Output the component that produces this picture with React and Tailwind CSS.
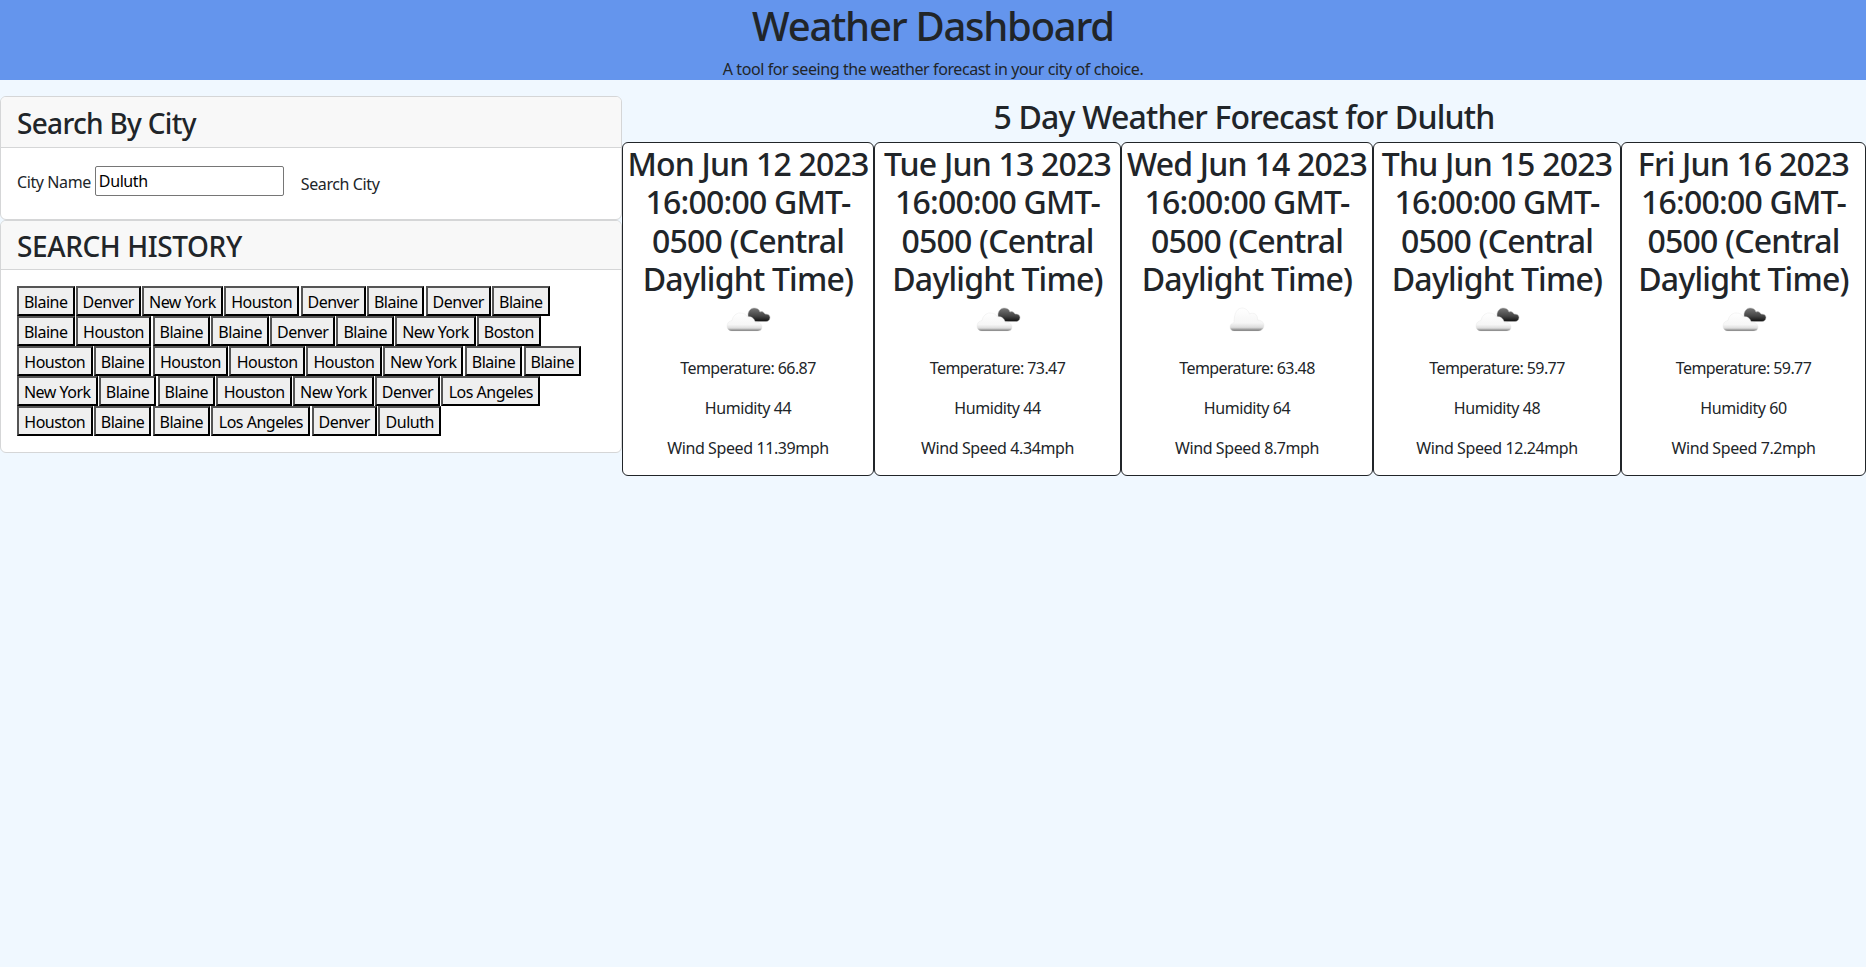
const rows = [
  ["Blaine","Denver","New York","Houston","Denver","Blaine","Denver","Blaine"],
  ["Blaine","Houston","Blaine","Blaine","Denver","Blaine","New York","Boston"],
  ["Houston","Blaine","Houston","Houston","Houston","New York","Blaine","Blaine"],
  ["New York","Blaine","Blaine","Houston","New York","Denver","Los Angeles"],
  ["Houston","Blaine","Blaine","Los Angeles","Denver","Duluth"],
];

const widths = {
  "Blaine": "w-[57.5px]",
  "Denver": "w-[65px]",
  "New York": "w-[80.5px]",
  "Houston": "w-[75.5px]",
  "Boston": "w-[63.5px]",
  "Los Angeles": "w-[99px]",
  "Duluth": "w-[63.5px]",
};

const days = [
  { w: "w-[252px]", d: "Mon Jun 12 2023 16:00:00 GMT-0500 (Central Daylight Time)", t: "66.87", h: "44", s: "11.39", dark: true },
  { w: "w-[247px]", d: "Tue Jun 13 2023 16:00:00 GMT-0500 (Central Daylight Time)", t: "73.47", h: "44", s: "4.34", dark: true },
  { w: "w-[252px]", d: "Wed Jun 14 2023 16:00:00 GMT-0500 (Central Daylight Time)", t: "63.48", h: "64", s: "8.7", dark: false },
  { w: "w-[248px]", d: "Thu Jun 15 2023 16:00:00 GMT-0500 (Central Daylight Time)", t: "59.77", h: "48", s: "12.24", dark: true },
  { w: "w-[245px]", d: "Fri Jun 16 2023 16:00:00 GMT-0500 (Central Daylight Time)", t: "59.77", h: "60", s: "7.2", dark: true },
];

function Cloud({ dark }) {
  return (
    <svg width="50" height="50" viewBox="0 2 50 50" className="block mx-auto -mt-[3px]">
      <defs>
        <linearGradient id="lg" x1="0" y1="0" x2="0" y2="1">
          <stop offset="0" stopColor="#ffffff" />
          <stop offset="0.65" stopColor="#f6f6f6" />
          <stop offset="0.84" stopColor="#dddddd" />
          <stop offset="0.93" stopColor="#a0a0a0" />
          <stop offset="1" stopColor="#666666" />
        </linearGradient>
        <linearGradient id="dg" x1="0" y1="0" x2="0" y2="1">
          <stop offset="0" stopColor="#777777" />
          <stop offset="0.6" stopColor="#444444" />
          <stop offset="1" stopColor="#111111" />
        </linearGradient>
      </defs>
      {dark && (
        <path transform="translate(-2 1)" d="M27 20c0-4 3-7 6-7 3 0 5 1 6 4 2-1 4 0 5 2 3 0 5 1 5 3.500 0 2.500-2 4-4 4H33c-3 0-6-3-6-6.500z" fill="url(#dg)" stroke="#bbbbbb" strokeWidth="0.5" />
      )}
      <path
        d={dark
          ? "M9 37c-3 0-5-2-5-5 0-3 2-5 5-5.500C10 22 13 19 17 19c3 0 6 1 7.500 4 3-1 7 1 7.500 5 4 0 7 2 7 5 0 3-2 4-5 4z"
          : "M12 37c-2.500 0-4-1.800-4-4 0-2.500 2-4 4-4.300C12 24 13 14 20 14c4 0 6.500 3 7.500 6 1-.5 2-.8 3-.8 3 0 5 2.500 5 5.500 0 .5 0 1-.1 1.300 3.500.2 6.600 2 6.600 5.500 0 3.500-3 5.500-6 5.500z"}
        fill="url(#lg)"
        stroke="#e6e6e6"
        strokeWidth="0.4"
      />
    </svg>
  );
}

export default function App() {
  return (
    <div className="min-h-[967px] bg-[#f0f8ff] text-[#212529] font-['Noto_Sans','Open_Sans',sans-serif] text-base">
      <header className="h-20 bg-[#6495ed] text-center flex flex-col items-center">
        <h1 className="text-[40px] leading-[48px] font-medium mt-[2px] tracking-[-1.25px]">Weather Dashboard</h1>
        <p className="text-base leading-6 mt-[7px] tracking-[-0.4px]">A tool for seeing the weather forecast in your city of choice.</p>
      </header>
      <main className="flex items-start">
        <aside className="w-[622px] pt-4 shrink-0">
          <section className="bg-white border border-[#d5d6d7] rounded-md overflow-hidden">
            <h5 className="h-[51px] bg-[#f8f8f8] border-b border-[#d5d6d7] px-4 text-[28px] leading-[52px] font-medium tracking-[-0.7px]">Search By City</h5>
            <div className="h-[71px] flex items-start pl-4 pt-[18px] tracking-[-0.4px]">
              <label className="leading-[30px] mt-px mr-[4px]">City Name</label>
              <input readOnly value="Duluth" className="w-[189px] h-[30px] border border-[#767676] rounded-[2px] px-[3px] text-black outline-none" />
              <span className="ml-[17px] mt-[3px] leading-[30px]">Search City</span>
            </div>
          </section>
          <section className="bg-white border border-[#d5d6d7] rounded-md overflow-hidden">
            <h5 className="h-[49px] bg-[#f8f8f8] border-b border-[#d5d6d7] px-4 text-[28px] leading-[50px] font-medium tracking-[-0.4px]">SEARCH HISTORY</h5>
            <div className="pl-4 pr-4 pt-4 pb-4 flex flex-col">
              {rows.map((row, r) => (
                <div key={r} className="flex h-[30px]">
                  {row.map((c, i) => (
                    <button key={i} className={`${widths[c]} h-[30px] p-0 pt-px bg-[#efefef] text-black border-2 border-t-[#555555] border-l-[#555555] border-r-black border-b-black mr-[1.3px] tracking-[-0.5px] leading-[26px] whitespace-nowrap text-center`}>{c}</button>
                  ))}
                </div>
              ))}
            </div>
          </section>
        </aside>
        <div className="flex-1 min-w-0">
          <h2 className="text-[32px] leading-[38px] font-medium text-center mt-[18px] mb-[6px] tracking-[-0.8px]">5 Day Weather Forecast for Duluth</h2>
          <div className="flex">
            {days.map((d) => (
              <article key={d.d} className={`${d.w} h-[334px] border border-[#212529] rounded-md bg-white text-center shrink-0`}>
                <h2 className="pt-[2px] text-[32px] leading-[38.4px] font-medium tracking-[-0.8px]">{d.d}</h2>
                <Cloud dark={d.dark} />
                <p className="mt-[10px] leading-6 tracking-[-0.6px]">Temperature: {d.t}</p>
                <p className="mt-4 leading-6 tracking-[-0.45px]">Humidity {d.h}</p>
                <p className="mt-4 leading-6 tracking-[-0.4px]">Wind Speed {d.s}mph</p>
              </article>
            ))}
          </div>
        </div>
      </main>
    </div>
  );
}
